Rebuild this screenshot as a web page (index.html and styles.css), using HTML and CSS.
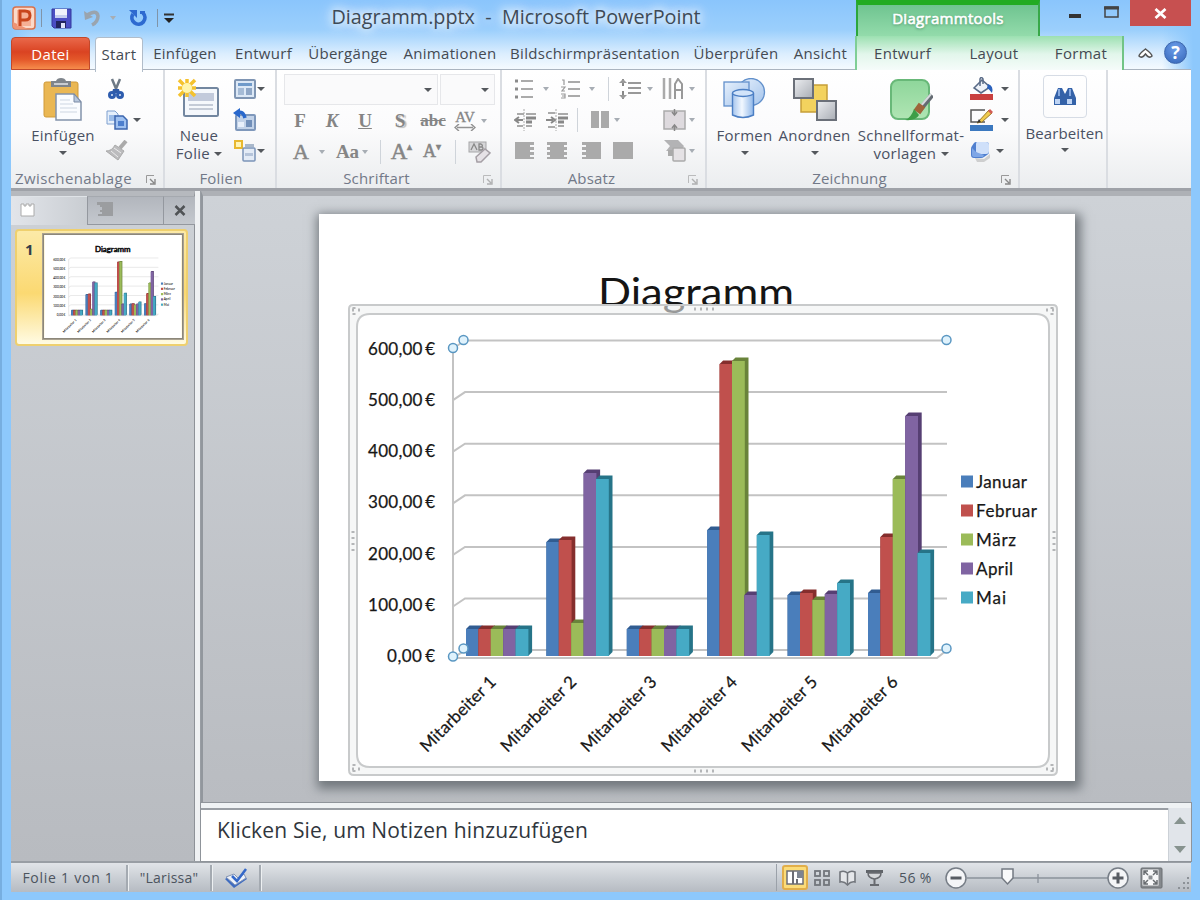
FILE: index.html
```html
<!DOCTYPE html>
<html lang="de">
<head>
<meta charset="utf-8">
<title>Diagramm.pptx - Microsoft PowerPoint</title>
<link rel="stylesheet" href="styles.css">
</head>
<body>
<div class="window">
  <header class="titlebar">
    <div class="quick">
      <svg class="q-logo" width="24" height="24" viewBox="0 0 24 24"><rect x="1" y="1" width="22" height="22" rx="3" fill="#fbd9c9" stroke="#d9714b" stroke-width="1.5"/><path d="M1 16L16 23H4Q1 23 1 20Z" fill="#ef9474"/><rect x="5" y="4" width="14" height="16" fill="#f6b095"/><path d="M8 20V5h5q5 0 5 4.500t-5 4.500H8" fill="none" stroke="#c8451c" stroke-width="3"/></svg>
      <i class="q-sep"></i>
      <svg class="q-save" width="21" height="21" viewBox="0 0 21 21"><path d="M1 1h19v19H3l-2-2z" fill="#4a4ec4" stroke="#35389c"/><path d="M4 1h12v9H4z" fill="#eef1fb"/><path d="M4 7h12v3H4z" fill="#c4cdf0"/><path d="M5 13h10v7H5z" fill="#23265f"/><path d="M10 15h4v5h-4z" fill="#dfe4f8"/></svg>
      <svg class="q-undo" width="19" height="20" viewBox="0 0 19 20"><path d="M4 7Q14 1 15 8Q15 14 9 17" fill="none" stroke="#9aa4ae" stroke-width="3.500"/><path d="M1 3l1 9 8-3z" fill="#9aa4ae"/></svg>
      <i class="caret dim"></i>
      <svg class="q-redo" width="19" height="19" viewBox="0 0 19 19"><path d="M15 4A6.500 6.500 0 1 1 5 5" fill="none" stroke="#2e6ad0" stroke-width="3.800"/><path d="M1 1h8v8z" fill="#2e6ad0"/><path d="M12 2h5v3h-5z" fill="#2e6ad0"/></svg>
      <i class="q-sep two"></i>
      <svg width="12" height="11" viewBox="0 0 12 11"><path d="M1 1.500h10" stroke="#333" stroke-width="2"/><path d="M1 5h10L6 10z" fill="#222"/></svg>
    </div>
    <h1 class="title">Diagramm.pptx&nbsp; -&nbsp; Microsoft PowerPoint</h1>
    <div class="context-title">Diagrammtools</div>
    <div class="controls">
      <svg class="c-min" width="12" height="4"><rect width="12" height="4" fill="#333"/></svg>
      <svg class="c-max" width="15" height="12"><rect x="1" y="1" width="13" height="10" fill="none" stroke="#444" stroke-width="1.500"/><path d="M0 2h15" stroke="#444" stroke-width="3"/></svg>
      <div class="close"><svg width="13" height="11" viewBox="0 0 13 11"><path d="M1.500 1l10 9m0-9l-10 9" stroke="#fff" stroke-width="2.800"/></svg></div>
    </div>
  </header>

  <nav class="tabs">
    <div class="tab file">Datei</div>
    <div class="tab active">Start</div>
    <div class="tab">Einfügen</div>
    <div class="tab">Entwurf</div>
    <div class="tab">Übergänge</div>
    <div class="tab">Animationen</div>
    <div class="tab">Bildschirmpräsentation</div>
    <div class="tab">Überprüfen</div>
    <div class="tab">Ansicht</div>
    <div class="context-tabs">
      <div class="tab">Entwurf</div><div class="tab">Layout</div><div class="tab">Format</div>
    </div>
    <div class="tab-tools">
      <svg width="15" height="12" viewBox="0 0 15 12"><path d="M1 8Q1 6 7.500 1Q14 6 14 8Q11 11 7.500 6Q4 11 1 8Z" fill="#fff" stroke="#555" stroke-width="1.500"/></svg>
      <div class="help">?</div>
    </div>
  </nav>

  <section class="ribbon">
    <div class="group clip">
      <div class="body">
        <div class="big">
          <svg width="40" height="43" viewBox="0 0 40 43"><rect x="1" y="4" width="34" height="35" rx="2" fill="#eab753" stroke="#cf9a3a"/><path d="M8 3h5q1-3 5-3t5 3h5v6H8z" fill="#7f858c"/><path d="M11 5h14v2H11z" fill="#c9cdd2"/><path d="M13 16h18l7 8v18H13z" fill="#fafcff" stroke="#8292ab" stroke-width="1.500"/><path d="M31 16v8h7z" fill="#b8c8dd" stroke="#7a8aa5"/><path d="M17 22h10M17 26h13M17 30h17M17 34h17" stroke="#cdd6e2"/></svg>
          <span>Einfügen</span><i class="caret"></i>
        </div>
        <div class="smalls">
          <div><svg width="22" height="24" viewBox="0 0 22 24"><path d="M7 2l5 12M15 2l-5 12" stroke="#6e7a86" stroke-width="2.500"/><path d="M8 12h6l1 4H7z" fill="#2f5aa6"/><circle cx="7" cy="18" r="2.500" fill="#dce8f8" stroke="#2d5cae" stroke-width="3"/><circle cx="15" cy="18" r="2.500" fill="#dce8f8" stroke="#2d5cae" stroke-width="3"/></svg></div>
          <div><svg width="24" height="22" viewBox="0 0 24 22"><path d="M2 2h8l3 3v10H2z" fill="#e5effb" stroke="#7ea0cf"/><path d="M4 6h7v6H4z" fill="#9dbde8"/><path d="M10 7h8l4 4v9H10z" fill="#9fc1f0" stroke="#3c66ae" stroke-width="1.500"/><path d="M13 12h6v5h-6z" fill="#4d7fce"/></svg><i class="caret"></i></div>
          <div><svg width="24" height="22" viewBox="0 0 24 22"><path d="M21 1l-6 7" stroke="#aaa" stroke-width="4"/><path d="M10 5l9 6-6 9L1 11q6 0 9-6z" fill="#bcbcbe" stroke="#aaa"/><path d="M6 11l7 6M9 8l7 5" stroke="#ececec"/></svg></div>
        </div>
      </div>
      <footer>Zwischenablage<svg class="launch" width="10" height="10" viewBox="0 0 10 10"><path d="M.5 8V.5H8" fill="none" stroke="#999"/><path d="M4 4l4 4M9 4v5H4" fill="none" stroke="#888" stroke-width="1.400"/></svg></footer>
    </div>

    <div class="group slides">
      <div class="body">
        <div class="big">
          <svg width="44" height="43" viewBox="0 0 44 43"><rect x="8" y="10" width="34" height="28" rx="1.500" fill="#f5f8fc" stroke="#7387a0" stroke-width="2"/><path d="M12 15h26v8H12z" fill="#c2cadb"/><path d="M13 27h24M13 31h24" stroke="#c4cbd7" stroke-width="2"/><path d="M11 1v18M3 2l16 16M2 10h18M3 18L19 2" stroke="#f4c22e" stroke-width="3.500"/><circle cx="11" cy="10" r="5" fill="#fff5ac"/></svg>
          <span>Neue</span><span class="line2">Folie <i class="caret"></i></span>
        </div>
        <div class="smalls">
          <div><svg width="24" height="22" viewBox="0 0 24 22"><rect x="2" y="2" width="20" height="18" rx="1" fill="#dce8f6" stroke="#7f95b3" stroke-width="2"/><path d="M5 5h14v3H5z" fill="#6f9aca"/><path d="M5 10h6v7H5z" fill="#a5bbd6"/><path d="M13 10h6v7h-6z" fill="#8ea6c6"/></svg><i class="caret"></i></div>
          <div><svg width="24" height="24" viewBox="0 0 24 24"><rect x="3" y="7" width="19" height="15" rx="1" fill="#c2d2e8" stroke="#7f98bb" stroke-width="2"/><path d="M13 12h6v7h-6z" fill="#718fb9"/><path d="M5 14h6v5H5z" fill="#e8f0fb"/><path d="M4 5q6-3 8 5" fill="none" stroke="#2968cc" stroke-width="3.500"/><path d="M7 0v10L0 5z" fill="#2968cc"/></svg></div>
          <div><svg width="24" height="24" viewBox="0 0 24 24"><rect x="2" y="2" width="7" height="7" fill="#fff5b6" stroke="#e8b830" stroke-width="2"/><path d="M12 5h9v3h-9z" fill="#a9b8cb"/><rect x="10" y="9" width="12" height="13" rx="1" fill="#e3ebf6" stroke="#7b94b8" stroke-width="1.500"/><path d="M12 14h8v3h-8z" fill="#b5c4da"/></svg><i class="caret"></i></div>
        </div>
      </div>
      <footer>Folien</footer>
    </div>

    <div class="group font">
      <div class="rows">
        <div class="combos"><div class="combo"><i class="caret"></i></div><div class="combo"><i class="caret"></i></div></div>
        <div class="frow one">
          <b>F</b><b class="it">K</b><b class="un">U</b><b class="sh">S</b><b class="st">abc</b>
          <span class="av">AV<svg width="22" height="7" viewBox="0 0 22 7"><path d="M3 3.500h16M5 0L1 3.500 5 7M17 0l4 3.500L17 7" fill="none" stroke="#929292" stroke-width="1.500"/></svg></span><i class="caret dim"></i>
        </div>
        <div class="frow two">
          <span class="a1">A</span><i class="caret dim"></i><i></i><span class="aa">Aa</span><i class="caret dim"></i><i class="vsep"></i>
          <span class="a2">A<sup>▴</sup></span><span class="a3">A<sup>▾</sup></span><i class="vsep"></i>
          <svg width="24" height="24" viewBox="0 0 24 24"><rect x="2" y="2" width="17" height="10" fill="#d6d6d8" stroke="#a6a6a8"/><path d="M4 10l3-6 3 6M12 4v6h3q2-2 0-3h-3 3q1-2-1-3z" fill="none" stroke="#888" stroke-width="1.300"/><path d="M9 17l9-8 5 4-9 9H10z" fill="#e6e2e6" stroke="#a59fa5" stroke-width="1.500"/></svg>
        </div>
      </div>
      <footer>Schriftart<svg class="launch faint" width="10" height="10" viewBox="0 0 10 10"><path d="M.5 8V.5H8" fill="none" stroke="#999"/><path d="M4 4l4 4M9 4v5H4" fill="none" stroke="#888" stroke-width="1.400"/></svg></footer>
    </div>

    <div class="group para">
      <div class="rows">
        <div class="prow p1">
          <svg width="20" height="20" viewBox="0 0 20 20"><path d="M1 2h3M1 10h3M1 18h3" stroke="#8b8b8b" stroke-width="3"/><path d="M7 2h12M7 10h12M7 18h12" stroke="#aaa" stroke-width="2"/></svg><i class="caret dim"></i>
          <svg width="20" height="20" viewBox="0 0 20 20"><path d="M1 1h2v5M0 8h4l-3 4h3M0 15h4v4H0M1 17h3" fill="none" stroke="#999" stroke-width="1.200"/><path d="M7 3h12M7 10h12M7 17h12" stroke="#aaa" stroke-width="2"/></svg><i class="caret dim"></i>
          <i class="vsep"></i>
          <svg width="22" height="22" viewBox="0 0 22 22"><path d="M4 1v7M4 13v8" stroke="#888" stroke-width="2"/><path d="M0 5l4-4 4 4zM0 17l4 4 4-4z" fill="#999"/><path d="M9 5h13M9 10h13M9 15h13" stroke="#999" stroke-width="2"/></svg><i class="caret dim"></i>
          <svg width="22" height="22" viewBox="0 0 22 22"><path d="M2 0v21M8 0v21" stroke="#aaa" stroke-width="2.500"/><path d="M13 21V6l3-5 4 5v15M13 12h7" fill="none" stroke="#999" stroke-width="2"/></svg><i class="caret dim"></i>
        </div>
        <div class="prow p2">
          <svg width="22" height="22" viewBox="0 0 22 22"><path d="M10 0v22" stroke="#aaa" stroke-dasharray="2 1"/><path d="M3 5h7M3 17h6M12 5h10M12 17h6" stroke="#aaa" stroke-width="2"/><path d="M12 9h10M12 13h6" stroke="#888" stroke-width="3"/><path d="M9 11H2m3-3l-4 3 4 3" fill="none" stroke="#888" stroke-width="2"/></svg>
          <svg width="22" height="22" viewBox="0 0 22 22"><path d="M10 0v22" stroke="#aaa" stroke-dasharray="2 1"/><path d="M2 4h7M2 18h7M12 5h10M12 17h6" stroke="#aaa" stroke-width="2"/><path d="M12 9h10M12 13h6" stroke="#888" stroke-width="3"/><path d="M0 11h7M5 8l4 3-4 3" fill="none" stroke="#888" stroke-width="2"/></svg>
          <i class="vsep"></i>
          <svg width="18" height="18" viewBox="0 0 18 18"><path d="M0 0h8v17H0zM10 0h8v17h-8z" fill="#aaa"/></svg><i class="caret dim"></i>
          <svg width="23" height="22" viewBox="0 0 23 22"><rect x="1" y="2" width="21" height="18" fill="#dedade" stroke="#aaa" stroke-width="1.500"/><path d="M11.500 0v5M9 3l2.500 3L14 3M11.500 22v-5M9 19l2.500-3 2.500 3" fill="none" stroke="#888" stroke-width="1.500"/></svg><i class="caret dim"></i>
        </div>
        <div class="prow p3">
          <svg width="20" height="18" viewBox="0 0 20 18"><path d="M0 0h19v3h-4v2h4v3h-4v2h4v3h-4v2h4v2H0z" fill="#aaa"/></svg>
          <svg width="20" height="18" viewBox="0 0 20 18"><path d="M0 0h20v3h-3v2h3v3h-3v2h3v3h-3v2h3v2H0v-2h3v-2H0v-3h3V8H0V5h3V3H0z" fill="#aaa"/></svg>
          <svg width="20" height="18" viewBox="0 0 20 18"><path d="M20 0H1v3h4v2H1v3h4v2H1v3h4v2H1v2h19z" fill="#aaa"/></svg>
          <svg width="20" height="18"><rect width="20" height="17" fill="#aaa"/></svg>
          <svg width="24" height="23" viewBox="0 0 24 23"><path d="M1 1h14l6 6-3 5H3l4-5z" fill="#b3b3b5"/><path d="M5 11h8v6H5z" fill="#aaa"/><rect x="10" y="9" width="12" height="13" rx="1" fill="#e5e2e5" stroke="#aaa" stroke-width="1.500"/></svg><i class="caret dim"></i>
        </div>
      </div>
      <footer>Absatz<svg class="launch faint" width="10" height="10" viewBox="0 0 10 10"><path d="M.5 8V.5H8" fill="none" stroke="#999"/><path d="M4 4l4 4M9 4v5H4" fill="none" stroke="#888" stroke-width="1.400"/></svg></footer>
    </div>

    <div class="group draw">
      <svg width="0" height="0" class="defs"><defs>
        <linearGradient id="blue"><stop offset="0" stop-color="#a5c5ee"/><stop offset=".45" stop-color="#f2f8ff"/><stop offset="1" stop-color="#8fb7e9"/></linearGradient>
        <linearGradient id="pale" x2="1" y2="1"><stop offset="0" stop-color="#e6f0fc"/><stop offset="1" stop-color="#a4c4ec"/></linearGradient>
        <linearGradient id="green" x2="0" y2="1"><stop offset="0" stop-color="#8ed69b"/><stop offset="1" stop-color="#b0e5b3"/></linearGradient>
        <linearGradient id="grey" x2="1" y2="1"><stop offset="0" stop-color="#eceef1"/><stop offset="1" stop-color="#a9adb4"/></linearGradient>
      </defs></svg>
      <div class="body">
        <div class="big b1">
          <svg width="44" height="43" viewBox="0 0 44 43"><circle cx="28" cy="14" r="13.500" fill="url(#pale)" stroke="#6290cb" stroke-width="1.300"/><rect x="1" y="4" width="25" height="24" fill="url(#pale)" stroke="#6290cb" stroke-width="1.300"/><path d="M9.500 15v22q10.500 5 21 0V15" fill="url(#blue)" stroke="#4c7fc4" stroke-width="1.400"/><ellipse cx="20" cy="15" rx="10.500" ry="3.500" fill="#d2e4fa" stroke="#4c7fc4" stroke-width="1.300"/></svg>
          <span>Formen</span><i class="caret"></i>
        </div>
        <div class="big b2">
          <svg width="44" height="43" viewBox="0 0 44 43"><rect x="8" y="7" width="26" height="27" fill="#f3d25e" stroke="#c69e38" stroke-width="1.500"/><rect x="1" y="1" width="19" height="19" fill="url(#grey)" stroke="#6b7079" stroke-width="2"/><rect x="24" y="23" width="19" height="19" fill="url(#grey)" stroke="#6b7079" stroke-width="2"/></svg>
          <span>Anordnen</span><i class="caret"></i>
        </div>
        <div class="big b3">
          <svg width="44" height="43" viewBox="0 0 44 43"><rect x="2" y="2" width="38" height="39" rx="7" fill="url(#green)" stroke="#68b878" stroke-width="2"/><path d="M43 17L30 33" stroke="#646b72" stroke-width="5"/><path d="M42 16L31 29" stroke="#d6dadd" stroke-width="2"/><path d="M33 27l-5 7" stroke="#9e643a" stroke-width="8"/><path d="M25 31l5 6q-3 6-14 5 6-2 9-11z" fill="#3d9e47"/></svg>
          <span>Schnellformat-</span><span class="line2">vorlagen <i class="caret"></i></span>
        </div>
        <div class="smalls">
          <div><svg width="24" height="24" viewBox="0 0 24 24"><path d="M4 11L12 3l8 7-9 6z" fill="#eef2f8" stroke="#596b87" stroke-width="1.600"/><path d="M10 9V2q1-3 3 0v5" fill="none" stroke="#596b87" stroke-width="1.500"/><path d="M18 7q6 2 4 9-3-4-5-5z" fill="#2a61bc"/><rect y="17" width="23" height="6" fill="#c9403f"/></svg><i class="caret"></i></div>
          <div><svg width="24" height="24" viewBox="0 0 24 24"><path d="M15 2H1v12h14" fill="none" stroke="#555" stroke-width="1.500"/><path d="M8 14L19 2l3 3L12 14l-5 1z" fill="#f0cb4e" stroke="#9a7a2a"/><path d="M18 3l2-2 3 3-2 2z" fill="#d25b55"/><path d="M7 15l4-1-2-3z" fill="#333"/><rect y="17" width="23" height="6" fill="#3b78bf"/></svg><i class="caret"></i></div>
          <div><svg width="22" height="22" viewBox="0 0 22 22"><path d="M5 18l9 1 6-5v4l-6 4H7z" fill="#aaa" opacity=".5"/><path d="M6 2h10q3 0 3 3v7q0 2-2 3l-3 2q-1 1-3 1H4q-3 0-3-3V9q0-2 1-3l2-3q1-1 2-1z" fill="#4f7fcf"/><path d="M7 2h9q3 0 3 3v6q0 3-3 3H9q-3 0-3-3V4q0-2 1-2z" fill="#cfe0fa"/><path d="M2 8l4 4 8 3-1 2H5q-3 0-3-2z" fill="#7ea6e6"/></svg><i class="caret"></i></div>
        </div>
      </div>
      <footer>Zeichnung<svg class="launch" width="10" height="10" viewBox="0 0 10 10"><path d="M.5 8V.5H8" fill="none" stroke="#999"/><path d="M4 4l4 4M9 4v5H4" fill="none" stroke="#888" stroke-width="1.400"/></svg></footer>
    </div>

    <div class="group edit">
      <div class="edit-icon"><svg width="24" height="21" viewBox="0 0 24 21"><path d="M5 2h4l3 6v11H1v-7zM15 2h4l4 10v7H12V8z" fill="#3462a8"/><path d="M2 13h5v5H2zM14 13h5v5h-5z" fill="#bed4f4"/><path d="M5 3h2v7H5zM16 3h2v7h-2z" fill="#86a9df"/></svg></div>
      <span>Bearbeiten</span><i class="caret"></i>
    </div>
  </section>

  <main class="workspace">
    <aside class="thumbs">
      <div class="thumb-tabs">
        <div class="tt on"><svg width="16" height="14" viewBox="0 0 16 14"><path d="M1 1h3v2h2V1h3v2h2V1h3v12H1z" fill="#fff" stroke="#aaa"/></svg></div>
        <div class="tt"><svg width="16" height="15" viewBox="0 0 16 15"><path d="M0 0h16v14H1v-2h4v-2H3V8h2V5H3V3H0z" fill="#9b9da0"/></svg></div>
        <div class="tt x"><svg width="12" height="11" viewBox="0 0 11 11"><path d="M1 1l9 9m0-9l-9 9" stroke="#505356" stroke-width="2.500"/></svg></div>
      </div>
      <div class="thumb">
        <b>1</b>
        <svg class="mini" width="140" height="105" viewBox="319 214 756 567"><rect x="319" y="214" width="756" height="567" fill="#fff"/><use href="#slideTitle" stroke="#151515" stroke-width="3"/><use href="#chart"/></svg>
      </div>
    </aside>
    <div class="right">
      <div class="canvas">
        <svg class="slide" width="756" height="567" viewBox="319 214 756 567">
          <text id="slideTitle" x="598" y="306" class="slide-title" textLength="196" lengthAdjust="spacingAndGlyphs">Diagramm</text>
          <path d="M353 305H1053Q1057 305 1057 309V770Q1057 775 1052 775H354Q349 775 349 770V309Q349 305 353 305ZM370 314Q357 314 357 327V754Q357 767 370 767H1036Q1049 767 1049 754V327Q1049 314 1036 314Z" class="frame"/>
          <g class="grips"><path d="M694 309h22M694 771h22M353 531v21M1054 531v21M352 310h8M1046 310h8M352 769h8M1046 769h8M354 307v8M1052 307v8M354 764v8M1052 764v8"/></g>
          <g id="chart">
            <g id="grid" class="grid"></g>
            <g id="bars"></g>
            <g id="labels" class="labels"></g>
            <g id="legend" class="labels"></g>
          </g>
          <g class="handles"><circle cx="453" cy="348" r="4.500"/><circle cx="463.500" cy="340" r="4.500"/><circle cx="946.500" cy="340" r="4.500"/><circle cx="453" cy="656.500" r="4.500"/><circle cx="463.500" cy="648.500" r="4.500"/><circle cx="946.500" cy="648.500" r="4.500"/></g>
        </svg>
      </div>
      <div class="notes">
        <p>Klicken Sie, um Notizen hinzuzufügen</p>
        <div class="scroll"><i class="up"></i><i class="down"></i></div>
      </div>
    </div>
  </main>

  <footer class="status">
    <span class="s1">Folie 1 von 1</span>
    <span class="s2">"Larissa"</span>
    <span class="s3"><svg width="24" height="21" viewBox="0 0 24 21"><path d="M1 11l7-4 6 5 5-6 4 5-13 9z" fill="#3f6cc0"/><path d="M2 9l8-3 4 4 6-4 2 4-11 7z" fill="#eef2f9" stroke="#8495b5"/><path d="M8 8l5 5L22 1" fill="none" stroke="#3468c9" stroke-width="2.500"/></svg></span>
    <div class="views">
      <div class="view on"><svg width="18" height="15" viewBox="0 0 18 15"><rect x="1" y="1" width="16" height="13" fill="#fff" stroke="#6c6d75" stroke-width="1.500"/><path d="M7 1v13M11 9v5" stroke="#6c6d75" stroke-width="2"/><path d="M11 1h6v7h-6z" fill="#7d8491"/></svg></div>
      <svg class="v2" width="17" height="16" viewBox="0 0 17 16"><g fill="none" stroke="#72767c" stroke-width="1.800"><rect x="1" y="1" width="5" height="5"/><rect x="10" y="1" width="5" height="5"/><rect x="1" y="10" width="5" height="5"/><rect x="10" y="10" width="5" height="5"/></g></svg>
      <svg class="v3" width="17" height="16" viewBox="0 0 17 16"><path d="M8.500 3Q5 0 1 2v10q4-1 7.500 3Q12 11 16 12V2q-4-2-7.500 1z" fill="#e5e7ea" stroke="#72767c" stroke-width="1.600"/><path d="M8.500 3v12" stroke="#72767c" stroke-width="1.500"/></svg>
      <svg class="v4" width="17" height="16" viewBox="0 0 17 16"><path d="M0 1.500h17" stroke="#606469" stroke-width="3"/><path d="M2 3h13q0 5-6.500 6Q2 8 2 3z" fill="#d5d7da" stroke="#686b70" stroke-width="1.500"/><path d="M8.500 9v5M4 15h9" stroke="#686b70" stroke-width="2"/></svg>
      <span class="pct">56 %</span>
      <svg width="186" height="24" viewBox="0 0 186 24"><path d="M23 12h141M94 8v9" stroke="#8b929b" stroke-width="1.300"/><circle cx="12" cy="12" r="10" fill="#f4f5f7" stroke="#767d86" stroke-width="1.500"/><path d="M6.500 12h11" stroke="#565b62" stroke-width="3"/><path d="M58 3h11v9l-5.500 6-5.500-6z" fill="#f8f9fa" stroke="#737982" stroke-width="1.500"/><circle cx="174" cy="12" r="10" fill="#f4f5f7" stroke="#767d86" stroke-width="1.500"/><path d="M168.500 12h11M174 6.500v11" stroke="#565b62" stroke-width="3"/></svg>
      <svg class="fit" width="23" height="22" viewBox="0 0 23 22"><rect x="1" y="1" width="21" height="20" rx="1" fill="#85898d" stroke="#6b6f73"/><rect x="2.500" y="2.500" width="16" height="16" fill="#f7f8f9"/><path d="M4 8V4h4M4 4l4 4M13 4h4v4M17 4l-4 4M4 13v4h4M4 17l4-4M17 13v4h-4M17 17l-4-4" fill="none" stroke="#686c70" stroke-width="1.500"/><rect x="8.500" y="8.500" width="4" height="4" fill="#8b8f94"/></svg>
      <svg class="size" width="15" height="15" viewBox="0 0 15 15"><path d="M12 1h2v2h-2zM8 6h2v2H8zM12 6h2v2h-2zM3 11h2v2H3zM8 11h2v2H8zM12 11h2v2h-2z" fill="#8c9197"/></svg>
    </div>
  </footer>
</div>
<script src="chart.js"></script>
</body>
</html>
```
FILE: styles.css
```css
* { box-sizing: border-box; }
body { margin: 0; font-family: "Open Sans", "Noto Sans", sans-serif; font-size: 15px; color: #444a52; }
.window { width: 1200px; height: 900px; overflow: hidden; padding: 0 9px 8px 9px; border-left: 2px solid #77aee0; display: flex; flex-direction: column; background: linear-gradient(90deg, #8dc8fc 0 8px, transparent 30px 1160px, #8dc8fc 1191px), linear-gradient(#8ac5fc 0, #9bcffc 30px, #dceefe 54px, #f6fbff 70px, #8dc8fc 70px); }
.caret { display: inline-block; width: 0; height: 0; border: 4px solid transparent; border-top: 4px solid #54585d; border-bottom: 0; flex: none; }
.caret.dim { border-top-color: #a7adb4; border-left-width: 3.500px; border-right-width: 3.500px; }

.titlebar { height: 36px; flex: none; display: flex; }
.quick { width: 280px; display: flex; align-items: center; padding-left: 1px; }
.q-sep { width: 1px; height: 18px; background: #8094a8; margin: 0 9px 0 5px; }
.q-undo { margin: 0 8px 0 11px; }
.q-redo { margin-left: 12px; }
.q-sep.two { margin: 0 5px 0 10px; }
.title { width: 450px; margin: 0; font-weight: 400; font-size: 19.800px; line-height: 34px; text-align: center; white-space: nowrap; color: #3e4a56; text-shadow: 0 0 12px #fff, 0 0 18px #fff, 0 0 8px #fff; }
.context-title { margin-left: 115px; width: 184px; border-top: 5px solid #22ab22; border-left: 2px solid #2ca63c; border-right: 2px solid #38a848; background: linear-gradient(#6fc490, #93dbab); color: #fff; text-align: center; font-size: 15px; letter-spacing: .3px; line-height: 27px; -webkit-text-stroke: .6px #fff; text-shadow: 0 1px 3px #3c805a; }
.controls { flex: 1; display: flex; align-items: flex-start; }
.c-min { margin: 14px 0 0 29px; flex: none; }
.c-max { margin: 6px 0 0 23px; flex: none; }
.close { width: 61px; height: 26px; margin-left: auto; background: #c75050; display: flex; align-items: center; justify-content: center; }

.tabs { height: 34px; flex: none; display: grid; grid-template-columns: 84px 48px 84px 73px 96px 108px 182px 100px 69px 269px 1fr; border-bottom: 1px solid #aab4c0; }
.tab { text-align: center; line-height: 35px; white-space: nowrap; font-size: 15px; letter-spacing: .3px; }
.tab.file { width: 79px; margin-top: 1px; height: 33px; line-height: 32px; background: linear-gradient(#e9684a, #da4322 45%, #e4582a 70%, #f68c4b); border: 1px solid #c2482b; border-radius: 4px 4px 0 0; color: #fff; }
.tab.active { background: #fff; border: 1px solid #b1bdca; border-bottom: 0; border-radius: 4px 4px 0 0; height: 35px; position: relative; margin-top: 1px; line-height: 32px; }
.context-tabs { display: grid; grid-template-columns: 91px 92px 1fr; border-left: 2px solid #7fce95; border-right: 2px solid #72c486; background: linear-gradient(#9ce0b1, #e2f6eb 50%, #f8fdfc); }
.tab-tools { display: flex; align-items: center; padding-left: 14px; }
.help { margin: -3px 0 0 11px; width: 23px; height: 23px; border-radius: 50%; background: radial-gradient(circle at 50% 30%, #6d9eea, #3465b8); border: 1px solid #3c66ad; color: #fff; font-weight: 700; font-size: 18px; line-height: 21px; text-align: center; }

.ribbon { height: 121px; flex: none; display: grid; grid-template-columns: 154px 112px 225px 205px 313px 88px; background: linear-gradient(#fff, #fbfbfc 50%, #ebedef); border-bottom: 3px solid #9fa2a8; color: #4a5163; }
.group { border-right: 2px solid #dadde2; display: flex; flex-direction: column; padding-top: 3px; }
.body { display: flex; height: 95px; }
.group footer { position: relative; text-align: center; line-height: 20px; color: #727988; font-size: 15px; letter-spacing: .2px; white-space: nowrap; }
.launch { position: absolute; right: 7px; top: 7px; }
.launch.faint { opacity: .6; }
.clip footer { text-align: left; padding-left: 4px; letter-spacing: .4px; }
.big { display: flex; flex-direction: column; align-items: center; padding-top: 5px; white-space: nowrap; font-size: 15px; letter-spacing: .3px; }
.big svg { flex: none; margin-bottom: 5px; }
.big span { line-height: 18px; }
.big > .caret { margin-top: 7px; }
.line2 .caret { margin-bottom: 3px; }
.smalls { display: flex; flex-direction: column; }
.smalls div { height: 31px; display: flex; align-items: center; gap: 4px; }
.clip .big { width: 104px; }
.clip .smalls { margin-left: -10px; }
.clip .smalls .caret { margin-left: 0; }
.slides .big { width: 68px; }
.slides .big svg { margin-right: 3px; }
.slides .smalls .caret { margin-left: -4px; }
.slides footer { padding-left: 2px; }
.font footer, .para footer { padding-right: 24px; }

.rows { height: 95px; }
.combos { display: flex; gap: 2px; margin: 1px 0 0 7px; }
.combo { height: 31px; width: 154px; border: 1px solid #e6e7ea; background: #fafafb; display: flex; justify-content: flex-end; align-items: center; padding-right: 5px; }
.combo + .combo { width: 55px; }
.frow { display: grid; align-items: center; justify-items: center; margin-left: 7px; height: 31px; font-family: "Liberation Serif", serif; color: #858585; }
.frow.one { grid-template-columns: 32px 32px 34px 36px 30px 34px 3px; font-size: 19px; }
.frow.two { grid-template-columns: 34px 8px 8px 27px 8px 22px 21px 40px 6px 42px; }
.it { font-style: italic; }
.un { text-decoration: underline; }
.sh { text-shadow: 2px 1px 1px #bbb; }
.st { text-decoration: line-through; font-size: 17px; }
.av { display: flex; flex-direction: column; align-items: center; font-size: 15px; line-height: 13px; -webkit-text-stroke: .3px; }
.a1 { font-size: 22px; -webkit-text-stroke: .5px; }
.aa { font-size: 19px; font-weight: 700; }
.a2 { font-size: 23px; -webkit-text-stroke: .5px; }
.a3 { font-size: 18px; -webkit-text-stroke: .5px; }
.frow sup { font-size: 10px; line-height: 0; }
.vsep { width: 1px; height: 24px; background: #cfd4da; }
.prow { display: grid; align-items: center; justify-items: center; height: 31px; margin-left: 12px; }
.para .rows, .font .rows { width: 100%; }
.p1 { grid-template-columns: 20px 24px 26px 16px 16px 28px 12px 34px 4px; }
.p2 { grid-template-columns: 22px 41px 0 36px 8px 69px 4px; }
.p2 > :nth-child(4) { margin-left: 10px; }
.p2 > :nth-child(6) { margin-left: 37px; }
.p3 { grid-template-columns: 22px 42px 25px 40px 47px 4px; }
.p3 > :nth-child(5) { margin-left: 16px; }

.b1 { width: 75px; }
.b2 { width: 65px; }
.b3 { width: 128px; }
.defs { position: absolute; }
.draw .smalls { margin-left: -5px; }
.draw .smalls .caret { margin-left: 3px; }
.draw .smalls div:last-child .caret { margin-left: 0; }
.draw footer { padding-right: 26px; }
.edit { align-items: center; padding-top: 5px; font-size: 15px; padding-left: 3px; }
.edit-icon { width: 44px; height: 43px; border: 1.500px solid #d6dce5; border-radius: 4px; display: flex; align-items: center; justify-content: center; margin-bottom: 5px; }
.edit span { letter-spacing: .1px; }
.edit .caret { margin-top: 5px; }

.workspace { flex: 1; min-height: 0; display: grid; grid-template-columns: 184px 1fr; background: #c5c8cd; }
.thumbs { border-right: 1px solid #8e9298; border-top: 5px solid #b6b9be; background: linear-gradient(#cdd1d6, #b8bbc0); }
.thumb-tabs { display: grid; grid-template-columns: 76px 77px 1fr; grid-template-rows: 29px; height: 29px; }
.tt { display: flex; align-items: flex-start; background: linear-gradient(#b2b6bd, #c4c8ce); border: 1px solid #94989f; border-top-color: #a5a9af; padding: 5px 9px; }
.tt.on { background: linear-gradient(90deg, #e2e5ea, #c9cdd2); border: 0; border-top: 1px solid #dfe3e7; padding-top: 6px; }
.tt.x { padding: 8px 10px; border-left: 0; }
.thumb { margin: 4px 6px 0 4px; height: 117px; border: 2px solid #efd06e; border-radius: 4px; background: linear-gradient(#fceaa8, #fbd972 55%, #fffbe3); display: flex; padding: 3px 0 0 8px; }
.thumb b { width: 18px; line-height: 31px; font-size: 15px; color: #333c48; }
.mini { border: 1px solid #8c877a; outline: 1px solid #a8a190; }
.right { display: flex; flex-direction: column; border-left: 5px solid #eff1f3; box-shadow: inset 1px 0 #989da3; padding-left: 1px; }
.canvas { height: 612px; border-top: 5px solid #aeb1b6; border-left: 2px solid #92979d; background: linear-gradient(#ced2d7, #b9bcc1); padding: 18px 0 0 116px; }
.slide { display: block; background: #fff; box-shadow: 2px 4px 10px 4px #73797e; }
.notes { flex: 1; border-top: 5px solid #eff2f4; outline: 1px solid #8f949a; box-shadow: inset 0 2px #999ea4; background: #fff; display: flex; position: relative; }
.notes p { flex: 1; margin: 0; padding-left: 16px; font-size: 21px; line-height: 45px; letter-spacing: .15px; color: #30363d; }
.scroll { width: 23px; background: #e1e5ea; border-left: 1px solid #ccd1d7; display: flex; flex-direction: column; justify-content: space-between; align-items: center; padding: 9px 0 8px; }
.up, .down { border: 6px solid transparent; border-bottom: 7px solid #87938f; border-top: 0; }
.down { border-top: 7px solid #87938f; border-bottom: 0; }

.slide-title { font-family: Lato, sans-serif; font-size: 39px; fill: #151515; }
.frame { fill: #f0f1f2; fill-opacity: .6; fill-rule: evenodd; stroke: #c8cacb; stroke-width: 2; }
.grips { stroke: #b4b6b8; stroke-width: 3; stroke-dasharray: 2 4; }
.grid { fill: none; stroke: #c3c3c3; stroke-width: 2; }
.labels { font-family: Lato, sans-serif; font-size: 17px; fill: #171717; stroke: #171717; stroke-width: .25px; }
.handles { fill: #dff2fc; stroke: #5a97c2; stroke-width: 1.500; }

.status { height: 31px; flex: none; border-top: 2px solid #999ea4; background: linear-gradient(#e1e4e8, #c6cbd1 60%, #b6bbc2); display: flex; align-items: center; font-size: 14px; color: #4c545e; white-space: nowrap; }
.status > span { height: 26px; line-height: 25px; text-align: center; border-right: 2px solid #a4aab1; box-shadow: 1px 0 #edf0f2; }
.s1 { width: 117px; letter-spacing: .75px; padding-right: 1px; }
.s2 { width: 84px; letter-spacing: .2px; }
.s3 { width: 49px; padding-top: 3px; line-height: 0 !important; }
.views { margin-left: auto; display: flex; align-items: center; height: 27px; border-left: 1px solid #9ba1a9; padding-left: 5px; }
.view.on { width: 26px; height: 25px; border: 2px solid #e1ae4a; background: #fbdc79; border-radius: 3px; display: flex; align-items: center; justify-content: center; }
.v2 { margin-left: 6px; }
.v3 { margin-left: 8px; }
.v4 { margin-left: 10px; }
.pct { width: 36px; margin: 0 9px 0 16px; letter-spacing: .4px; }
.fit { margin: 0 12px 0 10px; }
.size { align-self: flex-end; margin-right: 1px; }
```
FILE: chart.js
```js
const NS = "http://www.w3.org/2000/svg";
const add = (parent, name, attrs, text) => {
  const el = document.createElementNS(NS, name);
  for (const k in attrs) el.setAttribute(k, attrs[k]);
  if (text) el.textContent = text;
  document.getElementById(parent).appendChild(el);
};

const series = [
  ["Januar", "#4a7ebb", "#315c91", 51],
  ["Februar", "#c0504d", "#852e2d", 61],
  ["März", "#9bbb59", "#69833a", 40],
  ["April", "#8064a2", "#563f73", 37],
  ["Mai", "#46aac5", "#267488", 30]
];
// Top edge of every column front, per employee
const tops = [
  [629, 629, 629, 629, 629],
  [542, 540, 623, 473, 479],
  [629, 629, 629, 629, 629],
  [530, 364, 361, 595, 535],
  [595, 593, 600, 594, 583],
  [593, 537, 479, 416, 553]
];

for (let i = 0; i <= 6; i++) {
  const y = 340.5 + i * 51.6;
  add("grid", "path", { d: `M453 ${y + 8}L465 ${y}H947` });
  add("labels", "text", { x: i === 6 ? 387 : 368, y: 354.5 + i * 51.3, textLength: i === 6 ? 48 : 67 }, (6 - i) * 100 + ",00\u2009€");
}
add("grid", "path", { d: "M453 348V658H937L947 650" });

tops.forEach((group, g) => {
  group.forEach((y, s) => {
    const x = 466 + g * 80.4 + s * 12.4;
    add("bars", "path", { d: `M${x} ${y}l3.500 -3.500h13V652l-4 4H${x}Z`, fill: series[s][2] });
    add("bars", "rect", { x, y, width: 12.8, height: 656 - y, fill: series[s][1] });
  });
  const tx = 497 + g * 80.4;
  add("labels", "text", { x: tx, y: 683, "text-anchor": "end", transform: `rotate(-45 ${tx} 683)`, textLength: 99 }, "Mitarbeiter " + (g + 1));
});

series.forEach(([name, color, , w], i) => {
  const y = 481.5 + i * 29;
  add("legend", "rect", { x: 961, y: y - 6, width: 12, height: 12, fill: color, stroke: "none" });
  add("legend", "text", { x: 976, y: y + 6, textLength: w }, name);
});
```
